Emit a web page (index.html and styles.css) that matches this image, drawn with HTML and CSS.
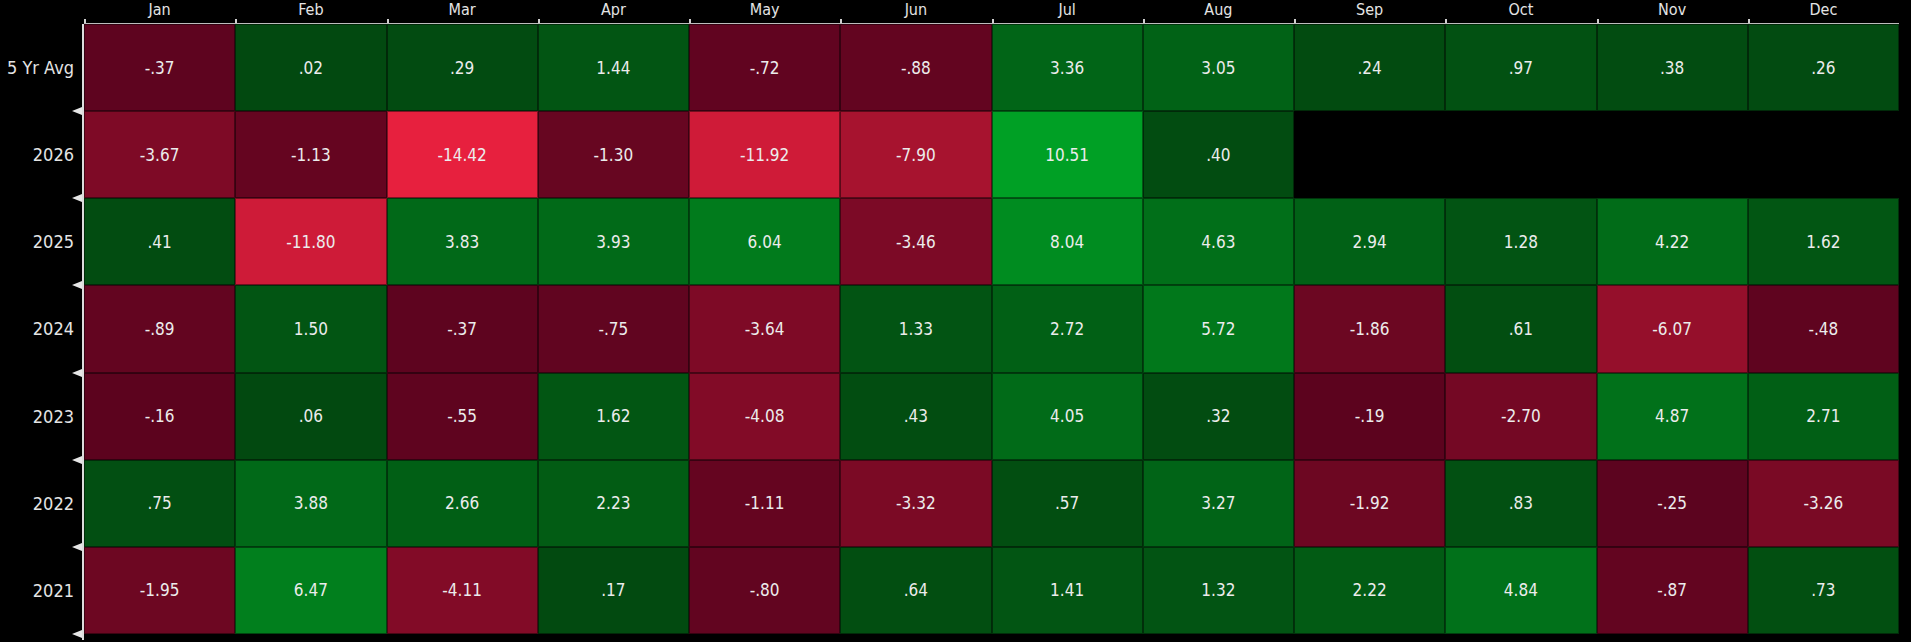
FILE: index.html
```html
<!DOCTYPE html>
<html lang="en">
<head>
<meta charset="utf-8">
<title>Seasonality</title>
<link rel="stylesheet" href="styles.css">
</head>
<body>
<div class="chart">
  <div class="corner"></div>
  <div class="months">
    <div class="month">Jan</div><div class="month">Feb</div><div class="month">Mar</div><div class="month">Apr</div>
    <div class="month">May</div><div class="month">Jun</div><div class="month">Jul</div><div class="month">Aug</div>
    <div class="month">Sep</div><div class="month">Oct</div><div class="month">Nov</div><div class="month">Dec</div>
  </div>
  <div class="labels">
    <div class="label">5 Yr Avg</div>
    <div class="label">2026</div>
    <div class="label">2025</div>
    <div class="label">2024</div>
    <div class="label">2023</div>
    <div class="label">2022</div>
    <div class="label">2021</div>
  </div>
  <div class="cells">
    <div class="cell neg" style="--a:0.37">-.37</div>
    <div class="cell pos" style="--a:0.02">.02</div>
    <div class="cell pos" style="--a:0.29">.29</div>
    <div class="cell pos" style="--a:1.44">1.44</div>
    <div class="cell neg" style="--a:0.72">-.72</div>
    <div class="cell neg" style="--a:0.88">-.88</div>
    <div class="cell pos" style="--a:3.36">3.36</div>
    <div class="cell pos" style="--a:3.05">3.05</div>
    <div class="cell pos" style="--a:0.24">.24</div>
    <div class="cell pos" style="--a:0.97">.97</div>
    <div class="cell pos" style="--a:0.38">.38</div>
    <div class="cell pos" style="--a:0.26">.26</div>

    <div class="cell neg" style="--a:3.67">-3.67</div>
    <div class="cell neg" style="--a:1.13">-1.13</div>
    <div class="cell neg" style="--a:14.42">-14.42</div>
    <div class="cell neg" style="--a:1.30">-1.30</div>
    <div class="cell neg" style="--a:11.92">-11.92</div>
    <div class="cell neg" style="--a:7.90">-7.90</div>
    <div class="cell pos" style="--a:10.51">10.51</div>
    <div class="cell pos" style="--a:0.40">.40</div>
    <div class="cell empty"></div>
    <div class="cell empty"></div>
    <div class="cell empty"></div>
    <div class="cell empty"></div>

    <div class="cell pos" style="--a:0.41">.41</div>
    <div class="cell neg" style="--a:11.80">-11.80</div>
    <div class="cell pos" style="--a:3.83">3.83</div>
    <div class="cell pos" style="--a:3.93">3.93</div>
    <div class="cell pos" style="--a:6.04">6.04</div>
    <div class="cell neg" style="--a:3.46">-3.46</div>
    <div class="cell pos" style="--a:8.04">8.04</div>
    <div class="cell pos" style="--a:4.63">4.63</div>
    <div class="cell pos" style="--a:2.94">2.94</div>
    <div class="cell pos" style="--a:1.28">1.28</div>
    <div class="cell pos" style="--a:4.22">4.22</div>
    <div class="cell pos" style="--a:1.62">1.62</div>

    <div class="cell neg" style="--a:0.89">-.89</div>
    <div class="cell pos" style="--a:1.50">1.50</div>
    <div class="cell neg" style="--a:0.37">-.37</div>
    <div class="cell neg" style="--a:0.75">-.75</div>
    <div class="cell neg" style="--a:3.64">-3.64</div>
    <div class="cell pos" style="--a:1.33">1.33</div>
    <div class="cell pos" style="--a:2.72">2.72</div>
    <div class="cell pos" style="--a:5.72">5.72</div>
    <div class="cell neg" style="--a:1.86">-1.86</div>
    <div class="cell pos" style="--a:0.61">.61</div>
    <div class="cell neg" style="--a:6.07">-6.07</div>
    <div class="cell neg" style="--a:0.48">-.48</div>

    <div class="cell neg" style="--a:0.16">-.16</div>
    <div class="cell pos" style="--a:0.06">.06</div>
    <div class="cell neg" style="--a:0.55">-.55</div>
    <div class="cell pos" style="--a:1.62">1.62</div>
    <div class="cell neg" style="--a:4.08">-4.08</div>
    <div class="cell pos" style="--a:0.43">.43</div>
    <div class="cell pos" style="--a:4.05">4.05</div>
    <div class="cell pos" style="--a:0.32">.32</div>
    <div class="cell neg" style="--a:0.19">-.19</div>
    <div class="cell neg" style="--a:2.70">-2.70</div>
    <div class="cell pos" style="--a:4.87">4.87</div>
    <div class="cell pos" style="--a:2.71">2.71</div>

    <div class="cell pos" style="--a:0.75">.75</div>
    <div class="cell pos" style="--a:3.88">3.88</div>
    <div class="cell pos" style="--a:2.66">2.66</div>
    <div class="cell pos" style="--a:2.23">2.23</div>
    <div class="cell neg" style="--a:1.11">-1.11</div>
    <div class="cell neg" style="--a:3.32">-3.32</div>
    <div class="cell pos" style="--a:0.57">.57</div>
    <div class="cell pos" style="--a:3.27">3.27</div>
    <div class="cell neg" style="--a:1.92">-1.92</div>
    <div class="cell pos" style="--a:0.83">.83</div>
    <div class="cell neg" style="--a:0.25">-.25</div>
    <div class="cell neg" style="--a:3.26">-3.26</div>

    <div class="cell neg" style="--a:1.95">-1.95</div>
    <div class="cell pos" style="--a:6.47">6.47</div>
    <div class="cell neg" style="--a:4.11">-4.11</div>
    <div class="cell pos" style="--a:0.17">.17</div>
    <div class="cell neg" style="--a:0.80">-.80</div>
    <div class="cell pos" style="--a:0.64">.64</div>
    <div class="cell pos" style="--a:1.41">1.41</div>
    <div class="cell pos" style="--a:1.32">1.32</div>
    <div class="cell pos" style="--a:2.22">2.22</div>
    <div class="cell pos" style="--a:4.84">4.84</div>
    <div class="cell neg" style="--a:0.87">-.87</div>
    <div class="cell pos" style="--a:0.73">.73</div>
  </div>
</div>
</body>
</html>
```

FILE: styles.css
```css
html, body {
  margin: 0;
  padding: 0;
  background: #000;
}

body {
  width: 1911px;
  height: 642px;
  overflow: hidden;
  font-family: "DejaVu Sans Condensed", "Liberation Sans", sans-serif;
  color: #e8e8e8;
}

.chart {
  display: grid;
  grid-template-columns: 84px 1815px;
  grid-template-rows: 24px 616px;
}

.months {
  display: grid;
  grid-template-columns: repeat(12, 1fr);
  border-bottom: 1px solid #bdbdbd;
  box-sizing: border-box;
}

.month {
  position: relative;
  text-align: center;
  font-size: 16px;
  line-height: 20px;
  color: #e4e4e4;
}

.month::before {
  content: "";
  position: absolute;
  left: 0;
  bottom: 0;
  width: 2px;
  height: 4px;
  background: #cfcfcf;
}

.labels {
  display: grid;
  grid-template-rows: repeat(7, 1fr);
  height: 616px;
  padding-bottom: 6px;
  box-sizing: border-box;
  border-right: 2px solid #dcdcdc;
}

.label {
  position: relative;
  display: flex;
  align-items: center;
  justify-content: flex-end;
  padding-right: 8px;
  font-size: 18px;
  color: #e4e4e4;
}

.label::after {
  content: "";
  position: absolute;
  right: 0;
  bottom: -4px;
  width: 0;
  height: 0;
  border-right: 10px solid #e6e6e6;
  border-top: 4px solid transparent;
  border-bottom: 4px solid transparent;
}

.cells {
  display: grid;
  grid-template-columns: repeat(12, 1fr);
  grid-template-rows: repeat(7, 1fr);
  height: 610px;
}

.cell {
  display: flex;
  align-items: center;
  justify-content: center;
  font-size: 17px;
  color: #ececec;
  box-shadow: inset 0 0 0 1px rgba(0, 0, 0, 0.45);
}

.cell.neg {
  background: rgb(calc(90 + 9.8 * var(--a)), calc(3 + 2 * var(--a)), calc(30 + 2.2 * var(--a)));
}

.cell.pos {
  background: rgb(calc(2 - 0.2 * var(--a)), calc(73 + 8.3 * var(--a)), calc(16 + 2 * var(--a)));
}

.cell.empty {
  background: transparent;
  box-shadow: none;
}
```
